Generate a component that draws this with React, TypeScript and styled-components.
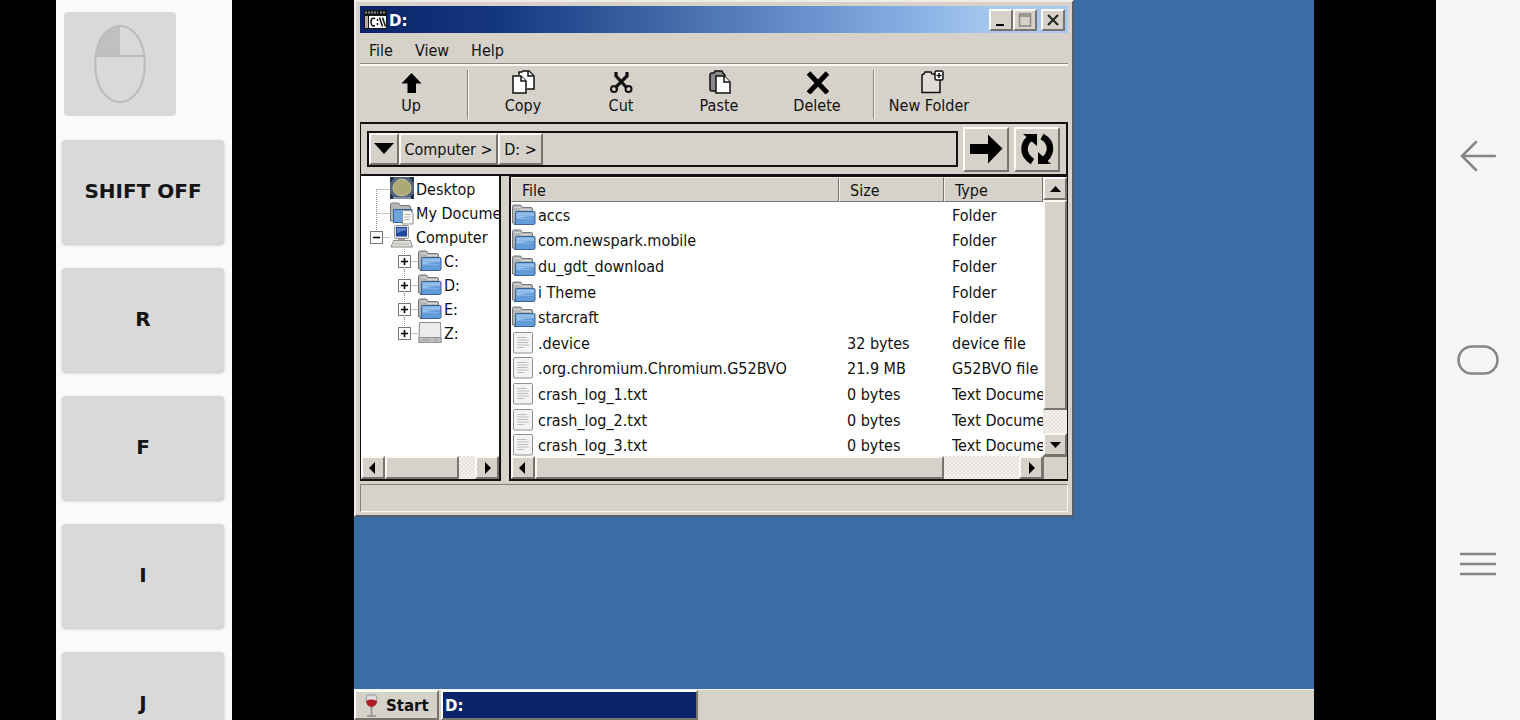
import React from "react";
import styled, { createGlobalStyle, css } from "styled-components";

const face = "#d6d2ca";
const ui = `"DejaVu Sans Condensed", "DejaVu Sans", "Liberation Sans", sans-serif`;
const bold = `"DejaVu Sans", "Liberation Sans", sans-serif`;

const GlobalStyle = createGlobalStyle`
  * { box-sizing: border-box; }
  body { margin: 0; background: #000; overflow: hidden; }
  button, input { font: inherit; color: inherit; margin: 0; padding: 0; border: 0; background: none; border-radius: 0; outline: 0; }
  ul { list-style: none; margin: 0; padding: 0; }
  svg { display: block; flex: none; }
`;

const raised = css`
  background: ${face};
  border: 2px solid;
  border-color: #fbfaf7 #77736e #77736e #fbfaf7;
`;

const Screen = styled.div`
  display: flex;
  height: 100vh;
  background: #000;
`;

/* ---------- on-screen keys ---------- */

const KeyPanel = styled.aside`
  flex: none;
  width: 176px;
  margin-left: 56px;
  padding: 12px 8px 0 6px;
  display: flex;
  flex-direction: column;
  gap: 24px;
  overflow: hidden;
  background: #fafafa;
`;

const MouseRow = styled.div`
  padding: 0 2px;
`;

const MouseKey = styled.button`
  display: flex;
  align-items: center;
  justify-content: center;
  width: 112px;
  height: 104px;
  border-radius: 4px;
  background: #d9d9d9;
`;

const Key = styled.button`
  flex: none;
  height: 104px;
  border-radius: 4px;
  background: #d9d9d9;
  box-shadow: 0 1px 3px rgba(0, 0, 0, 0.24);
  color: #151515;
  font: bold 20px/24px ${bold};
  padding-bottom: 2px;
`;

/* ---------- system navigation ---------- */

const NavBar = styled.nav`
  flex: none;
  width: 84px;
  display: flex;
  flex-direction: column;
  justify-content: space-between;
  align-items: center;
  padding: 134px 0;
  background: #f5f5f5;
`;

const NavButton = styled.button`
  width: 44px;
  height: 44px;
  display: flex;
  align-items: center;
  justify-content: center;
`;

/* ---------- desktop ---------- */

const Stage = styled.main`
  flex: 1;
  min-width: 0;
  display: flex;
  justify-content: center;
`;

const Desktop = styled.div`
  position: relative;
  height: 100%;
  aspect-ratio: 4 / 3;
  display: flex;
  flex-direction: column;
  justify-content: flex-end;
  background: #3b6da5;
  font: 16px/20px ${ui};
  color: #111;
`;

const Taskbar = styled.footer`
  display: flex;
  gap: 2px;
  height: 31px;
  border-top: 1px solid #f3f1ec;
  background: ${face};
`;

const StartButton = styled.button`
  ${raised}
  width: 85px;
  display: flex;
  align-items: center;
  gap: 4px;
  padding: 2px 6px 0;
  font: bold 15px/20px ${bold};
`;

const TaskButton = styled.button`
  ${raised}
  width: 257px;
  padding: 2px 2px 0;
  text-align: left;
  color: #fff;
  background: #0a246a;
  font: bold 15px/20px ${bold};
`;

/* ---------- window ---------- */

const Window = styled.section`
  position: absolute;
  top: 0;
  left: 0;
  width: 75%;
  display: flex;
  flex-direction: column;
  padding: 4px 4px 3px;
  background: ${face};
  border: 2px solid;
  border-color: #efece6 #55606c #55606c #efece6;
`;

const TitleBar = styled.header`
  display: flex;
  align-items: center;
  height: 27px;
  padding: 0 3px 0 4px;
  background: linear-gradient(90deg, #0a246a 0%, #153780 20%, #5077b5 50%, #82a9e0 75%, #a6caf0 90%);
`;

const Title = styled.h1`
  flex: 1;
  margin: 0;
  padding: 2px 0 0 2px;
  color: #fff;
  font: bold 15px/20px ${bold};
`;

const WindowButtons = styled.div`
  display: flex;
`;

const WindowButton = styled.button<{ $apart?: boolean }>`
  ${raised}
  width: 24px;
  height: 22px;
  margin-left: ${(p) => (p.$apart ? 4 : 0)}px;
  display: flex;
  align-items: center;
  justify-content: center;
`;

const MenuBar = styled.div`
  display: flex;
  gap: 22px;
  height: 31px;
  padding: 5px 9px 0;
  border-bottom: 1px solid #8c8882;
`;

const Toolbar = styled.div`
  display: flex;
  height: 58px;
  padding: 4px 2px 3px;
  border-top: 2px solid #faf8f4;
`;

const Tool = styled.button`
  width: 98px;
  display: flex;
  flex-direction: column;
  align-items: center;
  gap: 2px;
`;

const ToolDivider = styled.div`
  width: 2px;
  margin: 0 5px 0 7px;
  border-left: 1px solid #85817b;
  border-right: 1px solid #f8f6f2;
`;

const AddressBar = styled.div`
  display: flex;
  align-items: center;
  gap: 5px;
  height: 54px;
  padding: 0 6px;
  border: solid #111;
  border-width: 2px 2px 2px 1px;
`;

const PathBox = styled.div`
  flex: 1;
  min-width: 0;
  display: flex;
  height: 36px;
  border: 2px solid #111;
`;

const Crumb = styled.button<{ $w: number }>`
  ${raised}
  flex: none;
  width: ${(p) => p.$w}px;
  display: flex;
  align-items: center;
  justify-content: center;
  padding-top: 2px;
  white-space: nowrap;
`;

const PathInput = styled.input`
  flex: 1;
  min-width: 0;
`;

const BigButton = styled.button`
  ${raised}
  width: 46px;
  height: 45px;
  display: flex;
  align-items: center;
  justify-content: center;
`;

const Panes = styled.div`
  display: flex;
  gap: 8px;
  height: 305px;
`;

const TreePane = styled.div`
  flex: none;
  width: 141px;
  display: flex;
  flex-direction: column;
  background: #fff;
  border: solid #111;
  border-width: 0 2px 2px 1px;
`;

const Tree = styled.ul`
  flex: 1;
  padding-top: 1px;
  overflow: hidden;
  white-space: nowrap;
`;

const TreeRow = styled.li<{ $deep?: boolean }>`
  display: flex;
  align-items: center;
  height: 24px;
  padding-left: ${(p) => (p.$deep ? 29 : 1)}px;
`;

const TreeLabel = styled.span`
  padding: 1px 0 0 2px;
`;

const ListPane = styled.div`
  flex: 1;
  min-width: 0;
  display: grid;
  grid-template-columns: minmax(0, 1fr) 24px;
  grid-template-rows: minmax(0, 1fr) 23px;
  background: #fff;
  border: solid #111;
  border-width: 1px 1px 2px 2px;
`;

const TableClip = styled.div`
  overflow: hidden;
`;

const FileTable = styled.table`
  width: 100%;
  height: 281px;
  table-layout: fixed;
  border-collapse: separate;
  border-spacing: 0;
  white-space: nowrap;
`;

const HeadCell = styled.th<{ $w?: number }>`
  width: ${(p) => (p.$w ? p.$w + "px" : "auto")};
  height: 25px;
  padding: 2px 0 0 10px;
  text-align: left;
  font-weight: normal;
  line-height: 17px;
  background: ${face};
  border: 1px solid;
  border-color: #f5f3ee #77736e #77736e #f5f3ee;
`;

const Cell = styled.td`
  padding: 2px 0 0 8px;
  overflow: hidden;
`;

const NameCell = styled.td`
  padding: 0 0 0 1px;
`;

const FileName = styled.div`
  display: flex;
  align-items: center;
  gap: 2px;
  height: 25px;
`;

const FileLabel = styled.span`
  padding-top: 2px;
`;

const Scroll = styled.div<{ $vertical?: boolean }>`
  display: flex;
  flex: none;
  flex-direction: ${(p) => (p.$vertical ? "column" : "row")};
  ${(p) => (p.$vertical ? "" : "height: 23px;")}
  background: #ebe9e4 repeating-conic-gradient(#e4e1db 0 25%, #f4f3f0 0 50%) 0 0 / 4px 4px;
`;

const ArrowButton = styled.button`
  ${raised}
  flex: none;
  width: 24px;
  height: 23px;
  display: flex;
  align-items: center;
  justify-content: center;
`;

const Thumb = styled.div<{ $share: number }>`
  ${raised}
  flex: ${(p) => p.$share} 1 0;
`;

const Track = styled.div<{ $share: number }>`
  flex: ${(p) => p.$share} 1 0;
`;

const Corner = styled.div`
  background: ${face};
  border-top: 1px solid #77736e;
  border-left: 1px solid #77736e;
`;

const StatusBar = styled.div`
  height: 28px;
  margin-top: 3px;
  border: 1px solid;
  border-color: #85817b #f8f6f2 #f8f6f2 #85817b;
`;

/* ---------- drawings ---------- */

const Folder = () => (
  <svg width="24" height="24" viewBox="0 0 24 24">
    <path d="M.5 20V3.500q0-1.500 1.500-1.500h6q1 0 1.500 1l.8 1.500H19q1.500 0 1.500 1.500v3l-1 12z" fill="#b4b6b6" stroke="#74797c" />
    <path d="M2 4.500h6l1.500 2H19" stroke="#d6d8d8" fill="none" />
    <path d="M3.500 21V9.500q0-1 1-1H22q1 0 1 1V20q0 1.500-1.500 1.500H2q1.500 0 1.500-1.500z" fill="#629dda" stroke="#3a6494" />
    <path d="M4.500 9.500H22V13q-9 0-17.500 3z" fill="#96bfe9" />
    <path d="M6 12.500h14M6 15.500h14" stroke="#84b3e4" />
  </svg>
);

const TextFile = () => (
  <svg width="24" height="24" viewBox="0 0 24 24">
    <rect x="1.500" y="1.500" width="19" height="20.500" rx="1" fill="#f3f3f3" stroke="#8f8f8f" />
    <path d="M5 6.500h10M5 9h12M5 11.500h11M5 14h12M5 16.500h7" stroke="#bdbdbd" />
  </svg>
);

const DesktopIcon = () => (
  <svg width="24" height="24" viewBox="0 0 24 24">
    <rect x="0" y="0" width="24" height="22" fill="#54657c" />
    <path d="M0 0h5L0 6zM24 0h-5l5 6zM0 22h6l-6-6zM24 22h-6l6-6z" fill="#1f3048" />
    <path d="M8 3q4-1.500 8 0 5 3 5 8t-5 7q-4 1.500-8 0-5-2-5-7t5-8z" fill="#aca878" stroke="#cdc898" />
    <path d="M3 21h18" stroke="#8592a3" strokeWidth="2" />
  </svg>
);

const DocumentsIcon = () => (
  <svg width="24" height="24" viewBox="0 0 24 24">
    <path d="M.5 20V3.500q0-1.500 1.500-1.500h6q1 0 1.500 1l.8 1.500H19q1.500 0 1.500 1.500v3l-1 12z" fill="#b4b6b6" stroke="#74797c" />
    <path d="M3.500 21.500V8.500H22v13z" fill="#6ea5de" stroke="#3a6494" />
    <path d="M12.500 9.500h8l2.500 3V23H12.500z" fill="#f7f7f7" stroke="#8d9299" />
    <path d="M14.500 13.500h6M14.500 16h6M14.500 18.500h5" stroke="#b4b4b4" />
  </svg>
);

const ComputerIcon = () => (
  <svg width="24" height="24" viewBox="0 0 24 24">
    <rect x="4.500" y="0.500" width="14" height="13" rx="1" fill="#e4e4e0" stroke="#96968f" />
    <rect x="6" y="2" width="11" height="9.500" fill="#20489a" />
    <path d="M7 3h9v2.500q-5 0-9 3z" fill="#5d83c6" />
    <path d="M8 14h7v2.500H8z" fill="#9a9a96" />
    <path d="M3.500 15.500h17l2 6.500H1z" fill="#dededa" stroke="#90908b" />
    <path d="M4 19h15" stroke="#b5b5b0" />
  </svg>
);

const DriveIcon = () => (
  <svg width="24" height="24" viewBox="0 0 24 24">
    <path d="M1.500 1.500h21l.5 15v5H1v-5z" fill="#ececec" stroke="#8c8c8c" />
    <path d="M1 16.500h22v5H1z" fill="#c2c2c2" stroke="#8f8f8f" />
    <path d="M4 19h9M16 19h4" stroke="#969696" />
  </svg>
);

const Guide = ({ kind, last, first }: { kind: "line" | "plus" | "minus"; last?: boolean; first?: boolean }) => (
  <svg width="28" height="24" viewBox="0 0 28 24">
    <path
      d={`M14.500 ${first ? 12 : 0}V${last ? 12 : 24}M14.500 12.500H28`}
      stroke="#8a8a8a"
      strokeDasharray="1 1"
      fill="none"
    />
    {kind !== "line" && (
      <>
        <rect x="8.500" y="6.500" width="12" height="12" fill="#fff" stroke="#777" />
        <path d={kind === "plus" ? "M11 12.500h7M14.500 9v7" : "M11 12.500h7"} stroke="#000" strokeWidth="1.600" />
      </>
    )}
  </svg>
);

const paths = { left: "M8 0v12L2 6z", right: "M4 0v12l6-6z", up: "M1 9h11L6.500 3z", down: "M1 3h11L6.500 9z" };
const Arrow = ({ dir }: { dir: keyof typeof paths }) => (
  <svg width="13" height="12" viewBox="0 0 13 12">
    <path d={paths[dir]} fill="#000" />
  </svg>
);

const ConsoleIcon = () => (
  <svg width="23" height="20" viewBox="0 0 23 20">
    <path d="M0 0h23v19H0z" fill="#151515" />
    <path d="M1 2.500h13M16 2.500h5" stroke="#8a8a8a" strokeWidth="2" strokeDasharray="2 1" />
    <path d="M1 6h3v12H1z" fill="#b9a9a9" />
    <path d="M5 6h17v12H5z" fill="#fff" />
    <path d="M11 8.500Q7 7 7 12t4 3.500M13.500 9v2M13.500 13v2M15.500 7.500l3 9M18.500 7.500l3 9" stroke="#111" strokeWidth="1.500" fill="none" />
  </svg>
);

const UpIcon = () => (
  <svg width="24" height="24" viewBox="0 0 24 24">
    <path d="M12.500 3 22.500 13.500H17V23H8.500V13.500H2.500z" fill="#000" />
  </svg>
);

const CopyIcon = () => (
  <svg width="24" height="24" viewBox="0 0 24 24" fill="#fff" stroke="#111" strokeWidth="1.500">
    <path d="M8 5V2h3l1-1h6l5 5v13h-7" />
    <path d="M17 1v5h5" />
    <path d="M2 6h8l5 5v12H2z" />
    <path d="M10 6v5h5" />
  </svg>
);

const CutIcon = () => (
  <svg width="24" height="24" viewBox="0 0 24 24" fill="none" stroke="#111">
    <path d="M7 2v4l11 12M18 2v4L6 18" strokeWidth="3.200" />
    <circle cx="5" cy="19" r="3" strokeWidth="2" />
    <circle cx="19.500" cy="19" r="3" strokeWidth="2" />
  </svg>
);

const PasteIcon = () => (
  <svg width="24" height="24" viewBox="0 0 24 24" stroke="#111" strokeWidth="1.500">
    <path d="M9 21H5q-2 0-2-2V5q0-2 2-2h2l1-2h7l1 2 2 2v4" fill="#8b8987" />
    <path d="M9 6h8l6 6v11H9z" fill="#fff" />
    <path d="M17 6v6h6" fill="#fff" />
  </svg>
);

const DeleteIcon = () => (
  <svg width="24" height="24" viewBox="0 0 24 24">
    <path d="m3.500 3 19 20M22.500 3l-19 20" stroke="#000" strokeWidth="5" />
  </svg>
);

const NewFolderIcon = () => (
  <svg width="30" height="24" viewBox="0 0 30 24" fill="#dedbd8" stroke="#111" strokeWidth="1.500">
    <path d="M8 22.500V5l2-1 1-2h6l1 2h8v18.500z" />
    <rect x="21" y="1" width="8" height="9" rx="1.500" fill="#fff" />
    <path d="M25 3v5M22.500 5.500h5" />
  </svg>
);

const GoIcon = () => (
  <svg width="34" height="30" viewBox="0 0 34 30">
    <path d="M1 10h18V0.500L33.500 14.500 19 29.500V20H1z" fill="#000" />
  </svg>
);

const RefreshIcon = () => (
  <svg width="36" height="34" viewBox="0 0 36 34">
    <path d="M13.500 29.500Q5 24 5.500 16.500 6 9 12 6" stroke="#000" strokeWidth="6.500" fill="none" />
    <path d="M4 2h14v12z" fill="#000" />
    <path d="M23 4.500Q31.500 9 31 17.500 30 25 24 28" stroke="#000" strokeWidth="6.500" fill="none" />
    <path d="M32 32H19V20z" fill="#000" />
  </svg>
);

const MouseIcon = () => (
  <svg width="52" height="78" viewBox="0 0 52 78">
    <path d="M26 1C14 1 4 13 1.500 31H26z" fill="#c0c0c0" />
    <path d="M1.500 31C4 13 14 1 26 1s22 12 24.500 30v16C48 65 38 77 26 77S4 65 1.500 47zH50.500" fill="none" stroke="#bcbcbc" strokeWidth="2" />
  </svg>
);

const WineIcon = () => (
  <svg width="20" height="24" viewBox="0 0 20 24">
    <path d="M5 1h9q3 10-4.500 12Q2 11 5 1z" fill="#ddd" stroke="#999" />
    <path d="M4.500 6.500Q10 4.500 15 7q0 5-5.500 6Q4 12 4.500 6.500z" fill="#b01c22" />
    <path d="M9.500 13v8M5 22h9" stroke="#8d8d8d" strokeWidth="1.600" />
  </svg>
);

/* ---------- data ---------- */

const tools = [
  { label: "Copy", Icon: CopyIcon },
  { label: "Cut", Icon: CutIcon },
  { label: "Paste", Icon: PasteIcon },
  { label: "Delete", Icon: DeleteIcon },
];

const files = [
  ["accs", "", "Folder"],
  ["com.newspark.mobile", "", "Folder"],
  ["du_gdt_download", "", "Folder"],
  ["i Theme", "", "Folder"],
  ["starcraft", "", "Folder"],
  [".device", "32 bytes", "device file"],
  [".org.chromium.Chromium.G52BVO", "21.9 MB", "G52BVO file"],
  ["crash_log_1.txt", "0 bytes", "Text Document"],
  ["crash_log_2.txt", "0 bytes", "Text Document"],
  ["crash_log_3.txt", "0 bytes", "Text Document"],
];

const keys = ["SHIFT OFF", "R", "F", "I", "J"];

export default function App() {
  return (
    <Screen>
      <GlobalStyle />
      <KeyPanel>
        <MouseRow>
          <MouseKey aria-label="Left mouse button"><MouseIcon /></MouseKey>
        </MouseRow>
        {keys.map((k) => <Key key={k}>{k}</Key>)}
      </KeyPanel>

      <Stage>
        <Desktop>
          <Window>
            <TitleBar>
              <ConsoleIcon />
              <Title>D:</Title>
              <WindowButtons>
                <WindowButton aria-label="Minimize">
                  <svg width="14" height="14" viewBox="0 0 14 14"><path d="M2 12h8" stroke="#000" strokeWidth="2" /></svg>
                </WindowButton>
                <WindowButton aria-label="Maximize">
                  <svg width="14" height="14" viewBox="0 0 14 14"><path d="M1.500 1h11v12h-11zM1.500 3h11" fill="none" stroke="#8a8681" strokeWidth="1.500" /></svg>
                </WindowButton>
                <WindowButton aria-label="Close" $apart>
                  <svg width="14" height="14" viewBox="0 0 14 14"><path d="m2 2 10 10M12 2 2 12" stroke="#222" strokeWidth="2" /></svg>
                </WindowButton>
              </WindowButtons>
            </TitleBar>

            <MenuBar>
              <button>File</button>
              <button>View</button>
              <button>Help</button>
            </MenuBar>

            <Toolbar>
              <Tool><UpIcon />Up</Tool>
              <ToolDivider />
              {tools.map(({ label, Icon }) => <Tool key={label}><Icon />{label}</Tool>)}
              <ToolDivider />
              <Tool><NewFolderIcon />New Folder</Tool>
            </Toolbar>

            <AddressBar>
              <PathBox>
                <Crumb $w={30} aria-label="Locations">
                  <svg width="20" height="14" viewBox="0 0 20 14"><path d="M0 0h20L10 11z" fill="#000" /></svg>
                </Crumb>
                <Crumb $w={99}>Computer &gt;</Crumb>
                <Crumb $w={45}>D: &gt;</Crumb>
                <PathInput aria-label="Address" />
              </PathBox>
              <BigButton aria-label="Go"><GoIcon /></BigButton>
              <BigButton aria-label="Refresh"><RefreshIcon /></BigButton>
            </AddressBar>

            <Panes>
              <TreePane>
                <Tree>
                  <TreeRow><Guide kind="line" first /><DesktopIcon /><TreeLabel>Desktop</TreeLabel></TreeRow>
                  <TreeRow><Guide kind="line" /><DocumentsIcon /><TreeLabel>My Documents</TreeLabel></TreeRow>
                  <TreeRow><Guide kind="minus" last /><ComputerIcon /><TreeLabel>Computer</TreeLabel></TreeRow>
                  {["C:", "D:", "E:", "Z:"].map((d) => (
                    <TreeRow key={d} $deep>
                      <Guide kind="plus" last={d === "Z:"} />
                      {d === "Z:" ? <DriveIcon /> : <Folder />}
                      <TreeLabel>{d}</TreeLabel>
                    </TreeRow>
                  ))}
                </Tree>
                <Scroll>
                  <ArrowButton aria-label="Scroll left"><Arrow dir="left" /></ArrowButton>
                  <Thumb $share={74} />
                  <Track $share={17} />
                  <ArrowButton aria-label="Scroll right"><Arrow dir="right" /></ArrowButton>
                </Scroll>
              </TreePane>

              <ListPane>
                <TableClip>
                  <FileTable>
                    <thead>
                      <tr>
                        <HeadCell>File</HeadCell>
                        <HeadCell $w={105}>Size</HeadCell>
                        <HeadCell $w={99}>Type</HeadCell>
                      </tr>
                    </thead>
                    <tbody>
                      {files.map(([name, size, type]) => (
                        <tr key={name}>
                          <NameCell>
                            <FileName>
                              {type === "Folder" ? <Folder /> : <TextFile />}
                              <FileLabel>{name}</FileLabel>
                            </FileName>
                          </NameCell>
                          <Cell>{size}</Cell>
                          <Cell>{type}</Cell>
                        </tr>
                      ))}
                    </tbody>
                  </FileTable>
                </TableClip>
                <Scroll $vertical>
                  <ArrowButton aria-label="Scroll up"><Arrow dir="up" /></ArrowButton>
                  <Thumb $share={210} />
                  <Track $share={23} />
                  <ArrowButton aria-label="Scroll down"><Arrow dir="down" /></ArrowButton>
                </Scroll>
                <Scroll>
                  <ArrowButton aria-label="Scroll left"><Arrow dir="left" /></ArrowButton>
                  <Thumb $share={410} />
                  <Track $share={76} />
                  <ArrowButton aria-label="Scroll right"><Arrow dir="right" /></ArrowButton>
                </Scroll>
                <Corner />
              </ListPane>
            </Panes>

            <StatusBar />
          </Window>

          <Taskbar>
            <StartButton><WineIcon />Start</StartButton>
            <TaskButton>D:</TaskButton>
          </Taskbar>
        </Desktop>
      </Stage>

      <NavBar>
        <NavButton aria-label="Back">
          <svg width="36" height="30" viewBox="0 0 36 30"><path d="M35 15H2M16 1 2 15l14 14" fill="none" stroke="#868686" strokeWidth="2.500" strokeLinecap="round" /></svg>
        </NavButton>
        <NavButton aria-label="Home">
          <svg width="42" height="30" viewBox="0 0 42 30"><rect x="1.500" y="1.500" width="39" height="27" rx="13.500" fill="none" stroke="#868686" strokeWidth="2.500" /></svg>
        </NavButton>
        <NavButton aria-label="Recent apps">
          <svg width="36" height="24" viewBox="0 0 36 24"><path d="M0 2h36M0 12h36M0 22h36" stroke="#868686" strokeWidth="2.500" /></svg>
        </NavButton>
      </NavBar>
    </Screen>
  );
}
